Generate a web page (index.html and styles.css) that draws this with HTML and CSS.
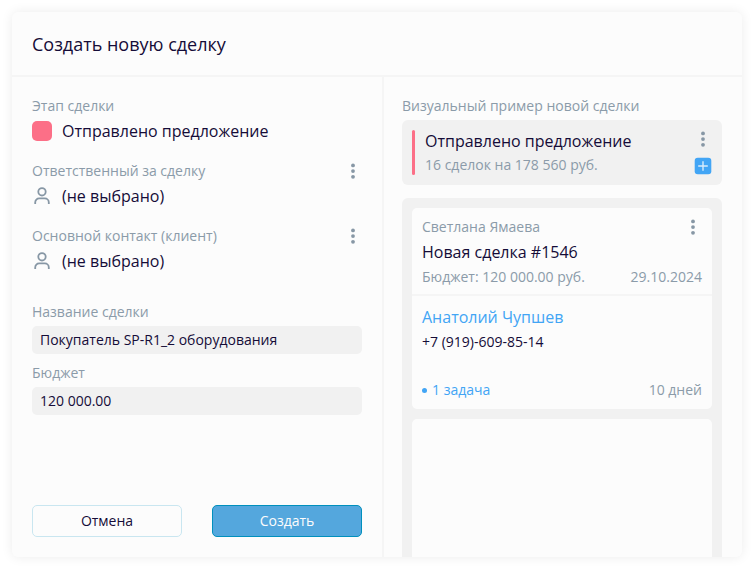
FILE: index.html
```html
<!DOCTYPE html>
<html lang="ru">
<head>
<meta charset="utf-8">
<title>Создать новую сделку</title>
<link rel="stylesheet" href="styles.css">
</head>
<body>
<svg class="sprite" aria-hidden="true">
  <symbol id="dots" viewBox="0 0 4 16"><circle cx="2" cy="2.4" r="1.9"/><circle cx="2" cy="8.1" r="1.9"/><circle cx="2" cy="13.8" r="1.9"/></symbol>
  <symbol id="person" viewBox="0 0 20 20"><circle cx="10" cy="5.8" r="3.7"/><path d="M3.2 18V16.4a4 4 0 0 1 4-4h5.6a4 4 0 0 1 4 4V18"/></symbol>
</svg>
<main class="dialog">
  <header class="dialog-header"><h1>Создать новую сделку</h1></header>
  <div class="dialog-body">
    <form class="form">
      <section class="group">
        <div class="label">Этап сделки</div>
        <div class="value"><span class="swatch"></span>Отправлено предложение</div>
      </section>
      <section class="group">
        <div class="label-row">
          <div class="label">Ответственный за сделку</div>
          <button class="more" type="button" aria-label="Меню"><svg><use href="#dots"/></svg></button>
        </div>
        <div class="value"><svg class="person"><use href="#person"/></svg>(не выбрано)</div>
      </section>
      <section class="group">
        <div class="label-row">
          <div class="label">Основной контакт (клиент)</div>
          <button class="more" type="button" aria-label="Меню"><svg><use href="#dots"/></svg></button>
        </div>
        <div class="value"><svg class="person"><use href="#person"/></svg>(не выбрано)</div>
      </section>
      <div class="fields">
        <div class="field">
          <label class="label" for="name">Название сделки</label>
          <input id="name" type="text" value="Покупатель SP-R1_2 оборудования">
        </div>
        <div class="field">
          <label class="label" for="budget">Бюджет</label>
          <input id="budget" type="text" value="120 000.00">
        </div>
      </div>
      <div class="actions">
        <button class="btn" type="button">Отмена</button>
        <button class="btn btn-primary" type="submit">Создать</button>
      </div>
    </form>
    <aside class="preview">
      <div class="label">Визуальный пример новой сделки</div>
      <section class="stage">
        <span class="stage-bar"></span>
        <div class="stage-text">
          <h2>Отправлено предложение</h2>
          <p class="label">16 сделок на 178 560 руб.</p>
        </div>
        <div class="stage-tools">
          <button class="more" type="button" aria-label="Меню"><svg><use href="#dots"/></svg></button>
          <button class="add" type="button" aria-label="Добавить"><svg viewBox="0 0 18 18"><rect x="0.7" y="0.7" width="16.6" height="16.6" rx="3"/><path d="M9 4.2v9.6M4.2 9h9.6"/></svg></button>
        </div>
      </section>
      <div class="column">
        <article class="card">
          <div class="card-top">
            <div class="label-row">
              <span class="label">Светлана Ямаева</span>
              <button class="more" type="button" aria-label="Меню"><svg><use href="#dots"/></svg></button>
            </div>
            <h2>Новая сделка #1546</h2>
            <div class="label-row label"><span>Бюджет: 120 000.00 руб.</span><span>29.10.2024</span></div>
          </div>
          <div class="card-bottom">
            <a class="contact" href="#contact">Анатолий Чупшев</a>
            <p class="phone">+7 (919)-609-85-14</p>
            <div class="card-foot label"><a class="task" href="#tasks">1 задача</a><span>10 дней</span></div>
          </div>
        </article>
        <div class="card card-empty"></div>
      </div>
    </aside>
  </div>
</main>
</body>
</html>
```
FILE: styles.css
```css
* {
  box-sizing: border-box;
}

body {
  margin: 0;
  padding: 12px;
  height: 100vh;
  background: #fff;
  color: #150c38;
  font: 14px/20px "Open Sans", "Noto Sans", sans-serif;
}

h1, h2, p {
  margin: 0;
  font-weight: 400;
}

h1 {
  font-size: 18px;
  line-height: 24px;
}

h2 {
  font-size: 16px;
  line-height: 22px;
}

a {
  color: #42a5f5;
  text-decoration: none;
}

button {
  margin: 0;
  padding: 0;
  border: 0;
  background: none;
  font: inherit;
  color: inherit;
}

.sprite {
  position: absolute;
  width: 0;
  height: 0;
}

.dialog {
  display: flex;
  flex-direction: column;
  height: calc(100vh - 24px);
  border-radius: 6px;
  overflow: hidden;
  background: #fcfcfc;
  box-shadow: 0 0 12px rgba(0, 0, 0, 0.08);
}

.dialog-header {
  padding: 20px 20px 19px;
  border-bottom: 2px solid #f5f5f5;
}

.dialog-body {
  display: grid;
  grid-template-columns: 372fr 358fr;
  flex: 1;
  min-height: 0;
}

.form {
  display: flex;
  flex-direction: column;
  gap: 15px;
  padding: 19px 20px 20px;
  border-right: 2px solid #f5f5f5;
}

.label {
  color: #8b9ba9;
}

.label-row,
.card-foot {
  display: flex;
  justify-content: space-between;
  align-items: center;
}

.value {
  display: flex;
  align-items: center;
  gap: 10px;
  height: 30px;
  font-size: 16px;
}

.swatch {
  width: 20px;
  height: 20px;
  border-radius: 5px;
  background: #fc6f87;
}

.person {
  width: 20px;
  height: 20px;
  fill: none;
  stroke: #8797a5;
  stroke-width: 1.8;
}

.more {
  display: flex;
  justify-content: center;
  width: 18px;
  height: 16px;
}

.more svg {
  width: 4px;
  height: 16px;
  fill: #8797a5;
}

.fields {
  display: grid;
  gap: 9px;
  margin-top: 11px;
}

.field {
  display: grid;
  gap: 4px;
}

.field input {
  width: 100%;
  height: 28px;
  padding: 0 8px 1px;
  border: 0;
  border-radius: 5px;
  background: #f1f1f1;
  color: inherit;
  font: inherit;
}

.actions {
  display: grid;
  grid-template-columns: 1fr 1fr;
  gap: 30px;
  margin-top: auto;
}

.btn {
  height: 32px;
  border: 1px solid #c9e6f0;
  border-radius: 5px;
}

.btn-primary {
  border-color: #0090bd;
  background: #54a7dd;
  color: #fcfcfc;
}

.preview {
  display: flex;
  flex-direction: column;
  min-height: 0;
  padding: 19px 20px 0 18px;
}

.stage {
  display: flex;
  gap: 10px;
  margin: 4px 0 13px;
  padding: 10px;
  border-radius: 6px;
  background: #f1f1f1;
}

.stage-bar {
  width: 3px;
  border-radius: 2px;
  background: #fc6f87;
}

.stage-text {
  display: grid;
  flex: 1;
  gap: 3px;
}

.stage-tools {
  display: flex;
  flex-direction: column;
  justify-content: space-between;
  padding-top: 1px;
}

.add,
.add svg {
  display: block;
  width: 18px;
  height: 18px;
}

.add rect {
  fill: #42a5f5;
}

.add path {
  stroke: #d8ecfc;
  stroke-width: 1.4;
}

.column {
  display: flex;
  flex-direction: column;
  flex: 1;
  gap: 10px;
  min-height: 0;
  padding: 10px 10px 0;
  border-radius: 6px 6px 0 0;
  background: #f1f1f1;
}

.card {
  border-radius: 5px;
  background: #fcfcfc;
}

.card-top {
  display: grid;
  gap: 4px;
  padding: 9px 10px 7px;
  border-bottom: 2px solid #f5f5f5;
}

.card-bottom {
  padding: 10px 10px 9px;
}

.contact {
  display: block;
  font-size: 16px;
  line-height: 22px;
}

.phone {
  margin: 4px 0 28px;
}

.task {
  display: flex;
  align-items: center;
  gap: 5px;
}

.task::before {
  content: "";
  width: 5px;
  height: 5px;
  border-radius: 50%;
  background: #42a5f5;
}

.card-empty {
  flex: 1;
  border-radius: 5px 5px 0 0;
}
```
